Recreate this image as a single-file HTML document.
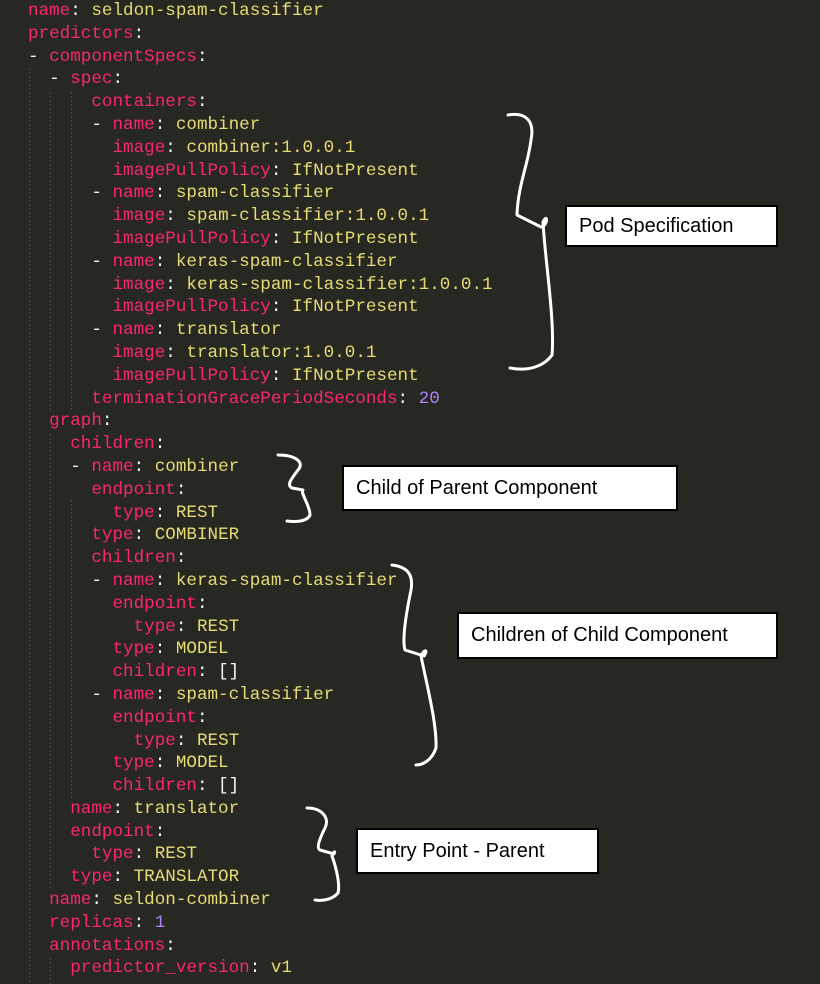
<!DOCTYPE html>
<html><head><meta charset="utf-8"><style>
html,body{margin:0;padding:0;background:#272822;width:820px;height:984px;overflow:hidden;position:relative}
pre{position:absolute;left:28px;top:0;margin:0;font-family:"Liberation Mono",monospace;font-size:17.6px;line-height:22.8px;color:#f8f8f2}
.k{color:#f92672}.v{color:#e6db74}.n{color:#ae81ff}
.box{position:absolute;background:#fff;border:2px solid #000;box-sizing:border-box;font-family:"Liberation Sans",sans-serif;font-size:20px;color:#000;padding-left:12px;display:flex;align-items:center}
svg{position:absolute;left:0;top:0}
</style></head><body>
<svg width="820" height="984">
<g stroke="#4a4b44" stroke-width="1" stroke-dasharray="2,2">
<line x1="29.5" y1="68" x2="29.5" y2="984"/>
<line x1="50.5" y1="92" x2="50.5" y2="410"/>
<line x1="71.5" y1="92" x2="71.5" y2="410"/>
<line x1="50.5" y1="434" x2="50.5" y2="890"/>
<line x1="71.5" y1="500" x2="71.5" y2="800"/>
<line x1="50.5" y1="958" x2="50.5" y2="984"/>
</g>
<g fill="none" stroke="#fff" stroke-width="3" stroke-linecap="round" stroke-linejoin="round">
<path d="M508,115 C525,112 535,120 531,140 C528,165 518,185 517,215 L541,227 C548,226 548,212 543,222 C545,260 555,320 552,355 C545,365 530,372 510,368"/>
<path d="M278,455 C295,455 305,462 298,470 C292,478 286,485 292,488 L303,490 C300,493 310,505 310,515 C307,522 295,522 287,521"/>
<path d="M392,565 C408,567 415,575 410,595 C406,615 402,640 405,650 L424,656 C428,650 425,648 421,656 C428,690 437,725 436,748 C432,760 423,765 416,765"/>
<path d="M307,808 C322,808 330,818 325,828 C320,838 316,848 320,850 L334,854 C336,850 333,852 332,856 C337,870 340,885 338,893 C332,900 322,901 315,900"/>
</g>
</svg>
<pre><span class="k">name</span>: <span class="v">seldon-spam-classifier</span>
<span class="k">predictors</span>:
- <span class="k">componentSpecs</span>:
  - <span class="k">spec</span>:
      <span class="k">containers</span>:
      - <span class="k">name</span>: <span class="v">combiner</span>
        <span class="k">image</span>: <span class="v">combiner:1.0.0.1</span>
        <span class="k">imagePullPolicy</span>: <span class="v">IfNotPresent</span>
      - <span class="k">name</span>: <span class="v">spam-classifier</span>
        <span class="k">image</span>: <span class="v">spam-classifier:1.0.0.1</span>
        <span class="k">imagePullPolicy</span>: <span class="v">IfNotPresent</span>
      - <span class="k">name</span>: <span class="v">keras-spam-classifier</span>
        <span class="k">image</span>: <span class="v">keras-spam-classifier:1.0.0.1</span>
        <span class="k">imagePullPolicy</span>: <span class="v">IfNotPresent</span>
      - <span class="k">name</span>: <span class="v">translator</span>
        <span class="k">image</span>: <span class="v">translator:1.0.0.1</span>
        <span class="k">imagePullPolicy</span>: <span class="v">IfNotPresent</span>
      <span class="k">terminationGracePeriodSeconds</span>: <span class="n">20</span>
  <span class="k">graph</span>:
    <span class="k">children</span>:
    - <span class="k">name</span>: <span class="v">combiner</span>
      <span class="k">endpoint</span>:
        <span class="k">type</span>: <span class="v">REST</span>
      <span class="k">type</span>: <span class="v">COMBINER</span>
      <span class="k">children</span>:
      - <span class="k">name</span>: <span class="v">keras-spam-classifier</span>
        <span class="k">endpoint</span>:
          <span class="k">type</span>: <span class="v">REST</span>
        <span class="k">type</span>: <span class="v">MODEL</span>
        <span class="k">children</span>: []
      - <span class="k">name</span>: <span class="v">spam-classifier</span>
        <span class="k">endpoint</span>:
          <span class="k">type</span>: <span class="v">REST</span>
        <span class="k">type</span>: <span class="v">MODEL</span>
        <span class="k">children</span>: []
    <span class="k">name</span>: <span class="v">translator</span>
    <span class="k">endpoint</span>:
      <span class="k">type</span>: <span class="v">REST</span>
    <span class="k">type</span>: <span class="v">TRANSLATOR</span>
  <span class="k">name</span>: <span class="v">seldon-combiner</span>
  <span class="k">replicas</span>: <span class="n">1</span>
  <span class="k">annotations</span>:
    <span class="k">predictor_version</span>: <span class="v">v1</span>
</pre>
<div class="box" style="left:565px;top:205px;width:213px;height:42px">Pod Specification</div>
<div class="box" style="left:342px;top:465px;width:336px;height:46px">Child of Parent Component</div>
<div class="box" style="left:457px;top:612px;width:321px;height:47px">Children of Child Component</div>
<div class="box" style="left:356px;top:828px;width:243px;height:46px">Entry Point - Parent</div>
</body></html>
